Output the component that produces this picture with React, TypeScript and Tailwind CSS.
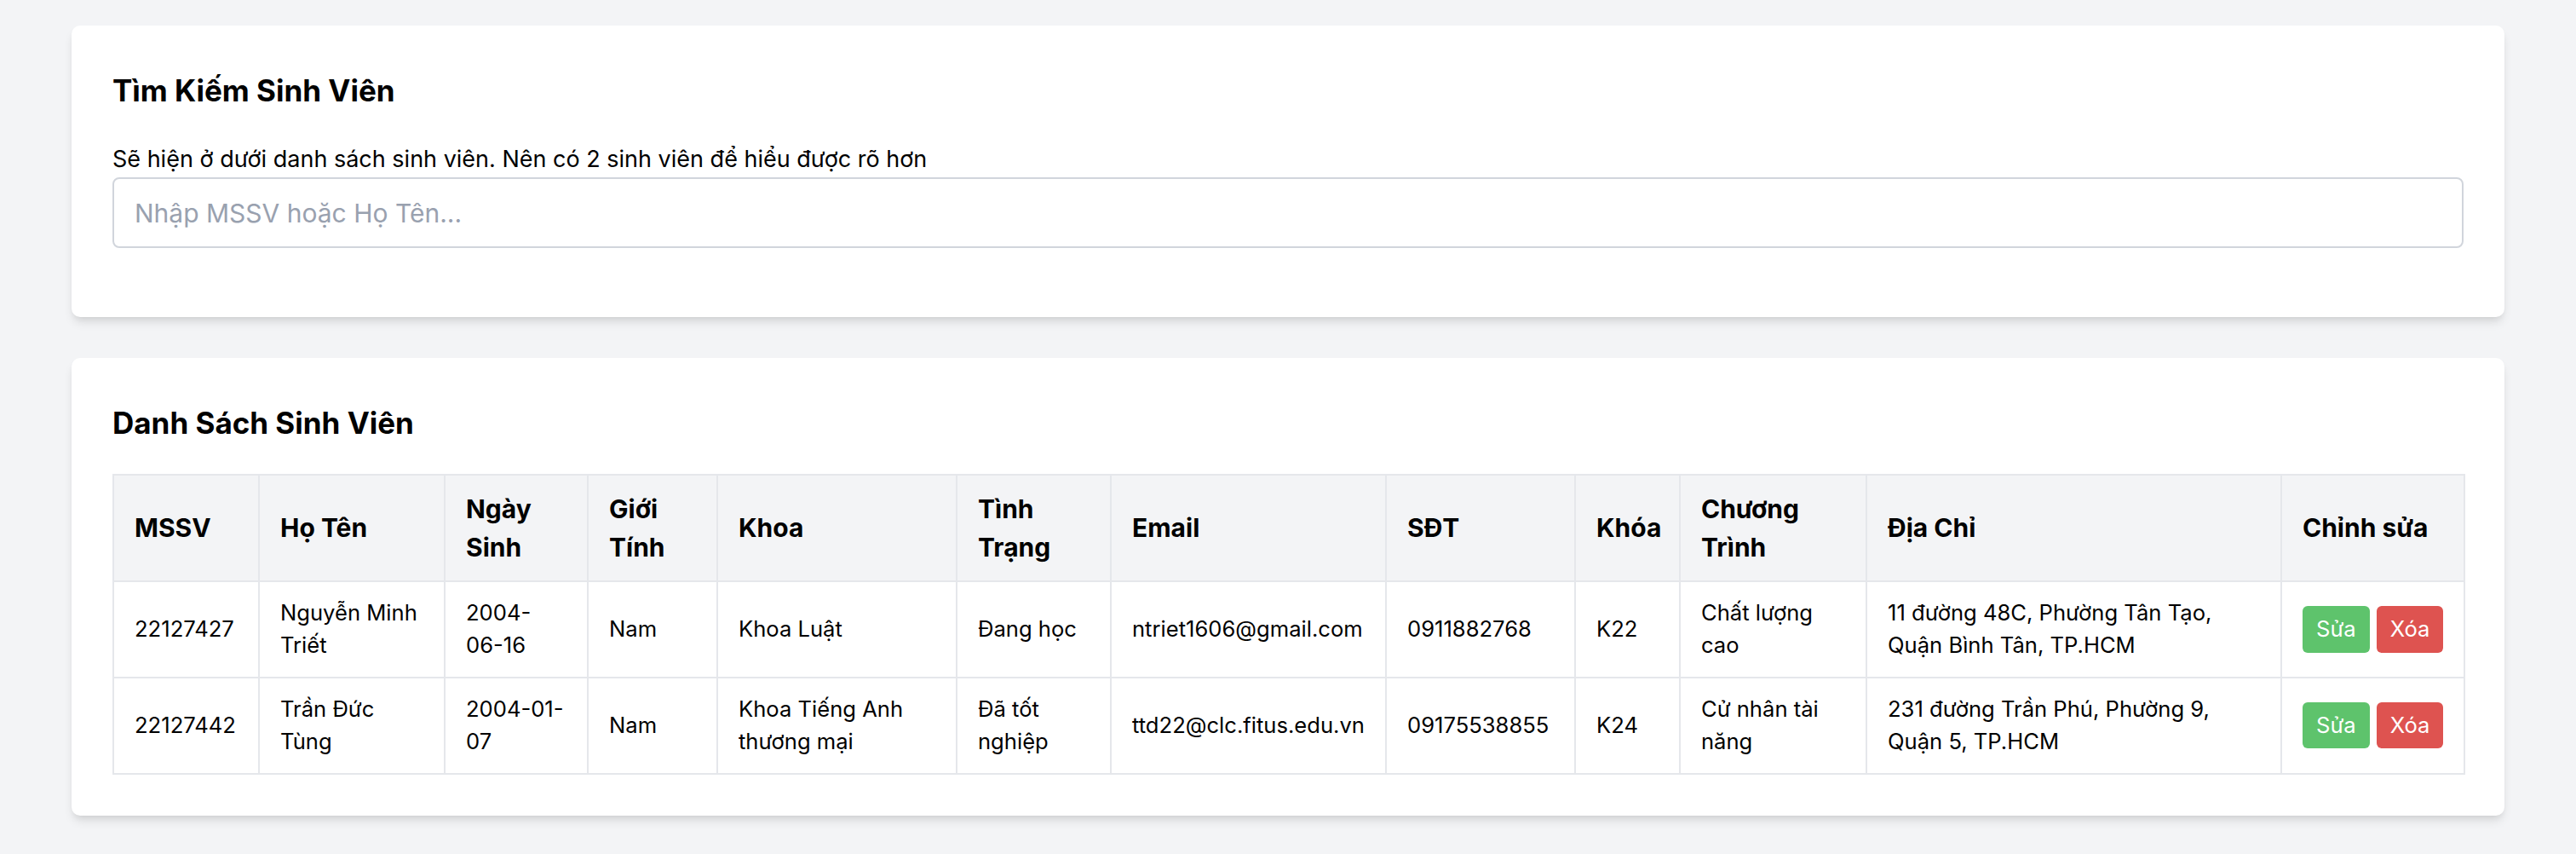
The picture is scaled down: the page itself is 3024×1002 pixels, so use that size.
import React from 'react';

type Student = {
  mssv: string;
  hoTen: string;
  ngaySinh: string;
  gioiTinh: string;
  khoa: string;
  tinhTrang: string;
  email: string;
  sdt: string;
  khoaHoc: string;
  chuongTrinh: string;
  diaChi: string;
};

const students: Student[] = [
  {
    mssv: '22127427',
    hoTen: 'Nguyễn Minh Triết',
    ngaySinh: '2004-06-16',
    gioiTinh: 'Nam',
    khoa: 'Khoa Luật',
    tinhTrang: 'Đang học',
    email: 'ntriet1606@gmail.com',
    sdt: '0911882768',
    khoaHoc: 'K22',
    chuongTrinh: 'Chất lượng cao',
    diaChi: '11 đường 48C, Phường Tân Tạo, Quận Bình Tân, TP.HCM',
  },
  {
    mssv: '22127442',
    hoTen: 'Trần Đức Tùng',
    ngaySinh: '2004-01-07',
    gioiTinh: 'Nam',
    khoa: 'Khoa Tiếng Anh thương mại',
    tinhTrang: 'Đã tốt nghiệp',
    email: 'ttd22@clc.fitus.edu.vn',
    sdt: '09175538855',
    khoaHoc: 'K24',
    chuongTrinh: 'Cử nhân tài năng',
    diaChi: '231 đường Trần Phú, Phường 9, Quận 5, TP.HCM',
  },
];

const headers = [
  'MSSV',
  'Họ Tên',
  'Ngày Sinh',
  'Giới Tính',
  'Khoa',
  'Tình Trạng',
  'Email',
  'SĐT',
  'Khóa',
  'Chương Trình',
  'Địa Chỉ',
  'Chỉnh sửa',
];

const th = 'border-2 border-gray-200 bg-gray-100 px-6 py-[16.5px] text-left align-middle text-[30px] font-bold leading-[45px]';
const td = 'border-2 border-gray-200 px-6 py-[17px] text-left align-middle text-[25.6px] leading-[38.4px]';

const App = () => {
  return (
    <div className="min-h-screen bg-gray-100 px-[84px] pb-12 pt-[30px] font-['Inter','Noto_Sans',sans-serif] text-black">
      {/* search card */}
      <div className="rounded-[10px] bg-white p-12 shadow-[0_8px_12px_-2px_rgba(0,0,0,0.1),0_4px_8px_-4px_rgba(0,0,0,0.1)]">
        <h2 className="mb-8 text-[35px] font-bold leading-[56px]">Tìm Kiếm Sinh Viên</h2>
        <label className="block text-[27px] leading-[42px]">
          Sẽ hiện ở dưới danh sách sinh viên. Nên có 2 sinh viên để hiểu được rõ hơn
        </label>
        <input
          type="text"
          placeholder="Nhập MSSV hoặc Họ Tên..."
          className="mb-[33px] block h-[83px] w-full rounded-[8px] border-2 border-gray-300 px-6 text-[30px] outline-none placeholder:text-gray-400"
        />
      </div>

      {/* list card */}
      <div className="mt-12 rounded-[10px] bg-white p-12 shadow-[0_8px_12px_-2px_rgba(0,0,0,0.1),0_4px_8px_-4px_rgba(0,0,0,0.1)]">
        <h2 className="mb-8 text-[35px] font-bold leading-[56px]">Danh Sách Sinh Viên</h2>
        <table className="w-full table-fixed border-collapse">
          <colgroup>
            <col className="w-[171px]" />
            <col className="w-[218px]" />
            <col className="w-[168px]" />
            <col className="w-[152px]" />
            <col className="w-[281px]" />
            <col className="w-[181px]" />
            <col className="w-[323px]" />
            <col className="w-[222px]" />
            <col className="w-[123px]" />
            <col className="w-[219px]" />
            <col className="w-[487px]" />
            <col className="w-[215px]" />
          </colgroup>
          <thead>
            <tr>
              {headers.map(h => (
                <th key={h} className={th}>{h}</th>
              ))}
            </tr>
          </thead>
          <tbody>
            {students.map(s => (
              <tr key={s.mssv}>
                <td className={td}>{s.mssv}</td>
                <td className={td}>{s.hoTen}</td>
                <td className={td}>{s.ngaySinh}</td>
                <td className={td}>{s.gioiTinh}</td>
                <td className={td}>{s.khoa}</td>
                <td className={td}>{s.tinhTrang}</td>
                <td className={td}>{s.email}</td>
                <td className={td}>{s.sdt}</td>
                <td className={td}>{s.khoaHoc}</td>
                <td className={td}>{s.chuongTrinh}</td>
                <td className={td}>{s.diaChi}</td>
                <td className={td}>
                  <div className="flex gap-2 whitespace-nowrap">
                    <button className="rounded-[6px] bg-[#5ec36c] px-4 py-2 text-[25.6px] leading-[38.4px] text-white">
                      Sửa
                    </button>
                    <button className="rounded-[6px] bg-[#de5350] px-4 py-2 text-[25.6px] leading-[38.4px] text-white">
                      Xóa
                    </button>
                  </div>
                </td>
              </tr>
            ))}
          </tbody>
        </table>
      </div>
    </div>
  );
};

export default App;
